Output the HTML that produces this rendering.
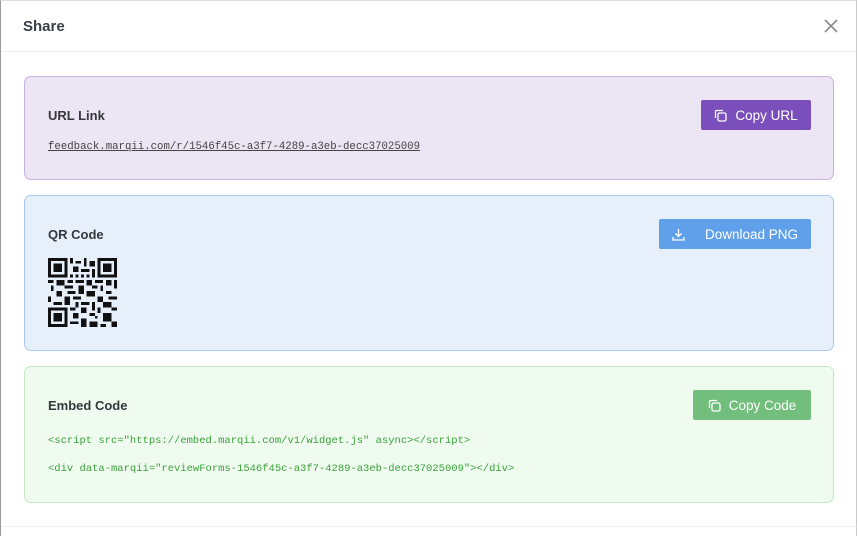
<!DOCTYPE html>
<html><head><meta charset="utf-8"><style>
*{box-sizing:border-box;margin:0;padding:0}
html,body{width:858px;height:536px;overflow:hidden;background:#fff;font-family:"Liberation Sans",sans-serif}
.modal{position:absolute;left:0;top:0;width:857px;height:536px;border-left:1px solid #9a9a9a;border-right:1px solid #c8c8c8;border-top:1px solid #e0e0e0;background:#fff}
.hdr{height:51px;border-bottom:1px solid #eef0f2;position:relative}
.hdr h1{position:absolute;left:22px;top:17px;font-size:15px;font-weight:bold;color:#3a3f45}
.x{position:absolute;left:823px;top:18px}
.card{position:absolute;left:23px;width:810px;border-radius:7px;border:1px solid}
.c1{top:75px;height:104px;background:#ece5f3;border-color:#c8b1e0}
.c2{top:194px;height:156px;background:#e7effa;border-color:#a9c8f0}
.c3{top:365px;height:137px;background:#f0fbf0;border-color:#c6e8c6}
.t{position:absolute;left:23px;font-size:13px;font-weight:bold;color:#34383d}
.mono{position:absolute;left:23px;font-family:"Liberation Mono",monospace;font-size:10.5px}
.btn{position:absolute;height:30px;border-radius:2px;color:#fff;font-size:13.5px;display:flex;align-items:center;justify-content:center;gap:8px}
.foot{position:absolute;left:0;top:525px;width:857px;border-top:1px solid #eef0f2}
</style></head><body><div class="modal">
<div class="hdr"><h1>Share</h1>
<svg class="x" width="14" height="14" viewBox="0 0 14 14"><path d="M1 1L13 13M13 1L1 13" stroke="#8a8a8a" stroke-width="1.6"/></svg></div>

<div class="card c1">
<div class="t" style="top:31px">URL Link</div>
<div class="mono" style="top:64px;color:#444;text-decoration:underline;font-size:10.7px">feedback.marqii.com/r/1546f45c-a3f7-4289-a3eb-decc37025009</div>
<div class="btn" style="left:676px;top:23px;width:110px;background:#7a4fbb"><svg width="13" height="13" viewBox="0 0 13 13" fill="none" stroke="#fff" stroke-width="1.3"><rect x="4" y="4" width="8" height="8" rx="1.5"/><path d="M1.5 9V2.5a1 1 0 0 1 1-1H9"/></svg>Copy URL</div>
</div>

<div class="card c2">
<div class="t" style="top:31px">QR Code</div>
<svg style="position:absolute;left:23px;top:62px" width="69" height="69" viewBox="0 0 25 25" shape-rendering="crispEdges"><g fill="#111">
<path d="M0 0h7v7h-7zM18 0h7v7h-7zM0 18h7v7h-7z"/></g><g fill="#e7effa"><path d="M1 1h5v5h-5zM19 1h5v5h-5zM1 19h5v5h-5z"/></g><g fill="#111"><path d="M2 2h3v3h-3zM20 2h3v3h-3zM2 20h3v3h-3z"/>
<path d="M8 0h1v2h-1zM10 1h2v1h-2zM13 0h1v3h-1zM15 1h2v2h-2zM9 3h2v2h-2zM12 4h3v1h-3zM16 4h1v3h-1zM8 6h1v1h-1zM10 6h1v1h-1zM12 6h1v1h-1zM14 6h1v1h-1zM0 8h2v1h-2zM3 8h3v2h-3zM7 8h2v1h-2zM10 8h3v1h-3zM14 8h2v2h-2zM17 8h3v1h-3zM21 8h2v2h-2zM24 8h1v3h-1zM1 10h1v2h-1zM6 10h3v1h-3zM11 10h2v3h-2zM16 10h2v1h-2zM19 10h1v2h-1zM3 12h2v2h-2zM7 12h3v1h-3zM14 12h3v2h-3zM21 12h2v1h-2zM0 14h1v2h-1zM6 14h2v3h-2zM9 14h3v1h-3zM18 14h2v2h-2zM22 14h3v1h-3zM2 16h3v1h-3zM10 16h1v2h-1zM12 16h3v1h-3zM16 16h1v3h-1zM20 16h3v2h-3zM8 18h2v1h-2zM12 18h2v2h-2zM18 18h1v2h-1zM23 18h2v1h-2zM9 20h2v2h-2zM15 20h2v1h-2zM20 20h3v3h-3zM8 23h3v1h-3zM12 22h2v3h-2zM15 23h3v2h-3zM19 24h2v1h-2zM23 23h2v2h-2zM17 21h1v1h-1z"/></g></svg>
<div class="btn" style="left:634px;top:23px;width:152px;background:#60a0ea;gap:20px"><svg width="13" height="13" viewBox="0 0 13 13" fill="none" stroke="#fff" stroke-width="1.3"><path d="M6.5 1v7M3.5 5.5l3 3 3-3M1 9v3h11V9"/></svg>Download PNG</div>
</div>

<div class="card c3">
<div class="t" style="top:31px">Embed Code</div>
<div class="mono" style="top:68px;color:#3aa23a">&lt;script src="https://embed.marqii.com/v1/widget.js" async&gt;&lt;/script&gt;</div>
<div class="mono" style="top:96px;color:#3aa23a">&lt;div data-marqii="reviewForms-1546f45c-a3f7-4289-a3eb-decc37025009"&gt;&lt;/div&gt;</div>
<div class="btn" style="left:668px;top:23px;width:118px;background:#72be7c"><svg width="13" height="13" viewBox="0 0 13 13" fill="none" stroke="#fff" stroke-width="1.3"><rect x="4" y="4" width="8" height="8" rx="1.5"/><path d="M1.5 9V2.5a1 1 0 0 1 1-1H9"/></svg>Copy Code</div>
</div>
<div class="foot"></div>
</div></body></html>
